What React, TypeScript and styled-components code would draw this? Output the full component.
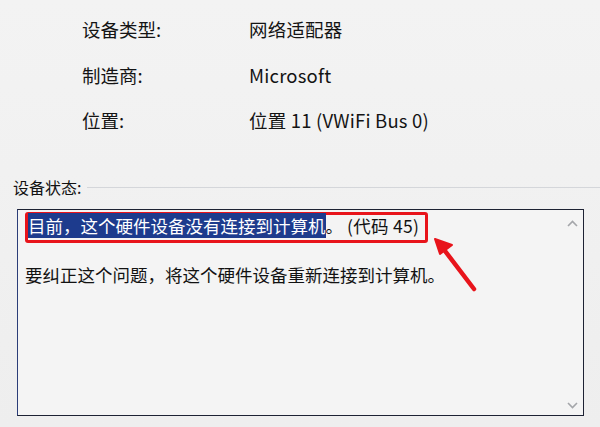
import React from 'react';
import styled, { createGlobalStyle } from 'styled-components';

const GlobalStyle = createGlobalStyle`
    html, body {
        margin: 0;
        padding: 0;
        background: #f1f1f1;
    }
    body {
        font-family: 'Noto Sans CJK SC', 'Noto Sans', sans-serif;
        color: #121212;
    }
`;

const Page = styled.div`
    position: relative;
    width: 600px;
    height: 427px;
    overflow: hidden;
    background: linear-gradient(180deg, #f3f3f3 0%, #f0f0f0 60%, #eeeeee 100%);
`;

const InfoGrid = styled.div`
    display: grid;
    grid-template-columns: 167px auto;
    row-gap: 19.5px;
    padding: 16px 0 0 82px;
    font-size: 18.5px;
    line-height: 26px;
`;

const Label = styled.div`
    color: #141414;
`;

const Value = styled.div`
    color: #141414;
    letter-spacing: 0.2px;
`;

const StatusGroup = styled.section`
    margin-top: 43px;
    padding: 0 16px 0 17px;
`;

const Legend = styled.div`
    display: flex;
    align-items: center;
    gap: 6px;
    margin-left: -4px;
    font-size: 16px;
    line-height: 22px;

    &::after {
        content: '';
        flex: 1;
        height: 1px;
        margin-right: -16px;
        background: #d4d6da;
    }
`;

const StatusBox = styled.div`
    position: relative;
    display: flex;
    margin-top: 11px;
    height: 205px;
    border: 1.5px solid #1d2233;
    border-left-color: #2b3d78;
    background: #f4f4f4;
`;

const StatusText = styled.div`
    flex: 1;
    padding: 1.5px 0 0 7px;
    font-size: 17.5px;
`;

const Marked = styled.span`
    display: inline-block;
    padding: 0 6px 3px 0;
    border: 3px solid #e8141b;
    border-radius: 3px;
    line-height: 22px;
`;

const Selection = styled.span`
    background: #1d3b8d;
    color: #ffffff;
`;

const Code = styled.span`
    margin-left: 4px;
    letter-spacing: 0.3px;
`;

const Hint = styled.div`
    margin-top: 20px;
    line-height: 24px;
`;

const ScrollBar = styled.div`
    display: flex;
    flex-direction: column;
    justify-content: space-between;
    align-items: center;
    width: 22px;
    padding: 10px 0 6px;
`;

const Chevron = styled.svg`
    width: 11px;
    height: 7px;
    stroke: #a4a6aa;
    stroke-width: 1.6;
    fill: none;
`;

const Pointer = styled.svg`
    position: absolute;
    left: 430px;
    top: 234px;
    width: 52px;
    height: 62px;
    overflow: visible;
`;

export default function App() {
    return (
        <Page>
            <GlobalStyle />
            <InfoGrid>
                <Label>设备类型:</Label>
                <Value>网络适配器</Value>
                <Label>制造商:</Label>
                <Value>Microsoft</Value>
                <Label>位置:</Label>
                <Value>位置 11 (VWiFi Bus 0)</Value>
            </InfoGrid>
            <StatusGroup>
                <Legend>设备状态:</Legend>
                <StatusBox>
                    <StatusText>
                        <Marked>
                            <Selection>目前，这个硬件设备没有连接到计算机</Selection>。<Code>(代码 45)</Code>
                        </Marked>
                        <Hint>要纠正这个问题，将这个硬件设备重新连接到计算机。</Hint>
                    </StatusText>
                    <ScrollBar>
                        <Chevron viewBox="0 0 11 7">
                            <polyline points="1,6 5.5,1.5 10,6" />
                        </Chevron>
                        <Chevron viewBox="0 0 11 7">
                            <polyline points="1,1 5.5,5.5 10,1" />
                        </Chevron>
                    </ScrollBar>
                </StatusBox>
            </StatusGroup>
            {/* red callout arrow pointing at the error code */}
            <Pointer viewBox="0 0 52 62">
                <line x1="44" y1="55" x2="12" y2="13" stroke="#e8141b" strokeWidth="4.5" strokeLinecap="round" />
                <polygon points="5,5 22,11 10,20" fill="#e8141b" stroke="#e8141b" strokeWidth="2" strokeLinejoin="round" />
            </Pointer>
        </Page>
    );
}
